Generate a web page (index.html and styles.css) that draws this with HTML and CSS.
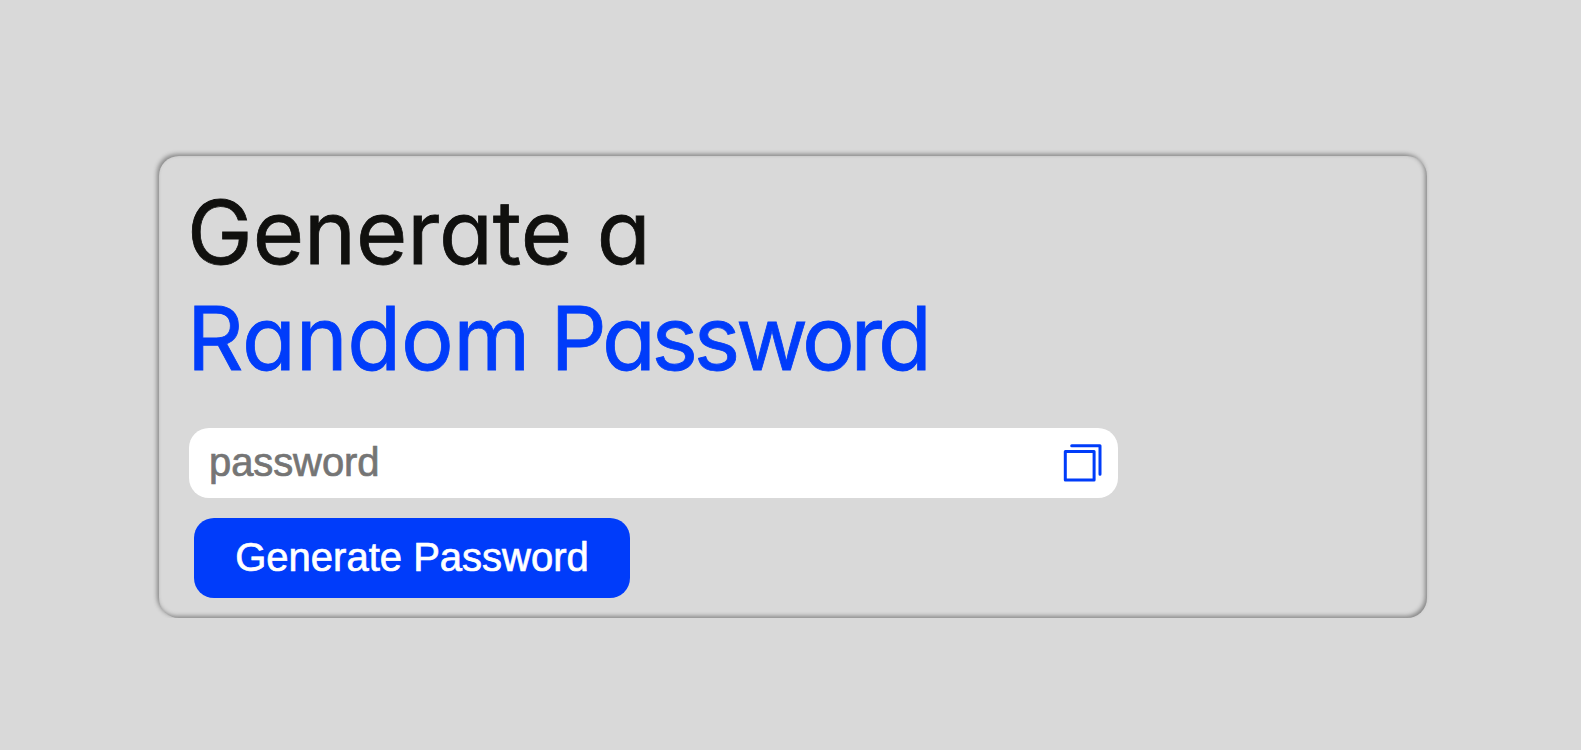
FILE: index.html
```
<!DOCTYPE html>
<html lang="en">
<head>
<meta charset="utf-8">
<title>Random Password Generator</title>
<link rel="stylesheet" href="styles.css">
</head>
<body>
<main class="card">
  <h1 class="title"><span class="line">Generate a</span><span class="line accent">Random <span class="word">Password</span></span></h1>
  <div class="display">
    <input class="field" type="text" placeholder="password" aria-label="password">
    <svg class="copy" viewBox="0 0 40 40" fill="none" stroke="currentColor" stroke-width="3" stroke-linecap="round" stroke-linejoin="round"><rect x="2.3" y="8.5" width="28.8" height="28.5"/><path d="M8.7 2.8h28.3v28.4"/></svg>
  </div>
  <button class="generate" type="button">Generate Password</button>
</main>
</body>
</html>
```
FILE: styles.css
```
* {
  box-sizing: border-box;
  margin: 0;
  padding: 0;
}
body {
  background: #d9d9d9;
  font-family: "Liberation Sans", Arial, sans-serif;
}
.card {
  width: 1268px;
  height: 462px;
  margin: 156px 0 0 159px;
  padding: 23px 30px 20px;
  border-radius: 20px;
  box-shadow: -2px -2px 4px #888, inset -2px -2px 4px #888;
}
.title {
  margin-left: -2px;
  font-family: Inter, sans-serif;
  font-feature-settings: "cv11";
  font-size: 88px;
  font-weight: 400;
  line-height: 106px;
  height: 249px;
  color: #10100e;
  letter-spacing: 0;
  -webkit-text-stroke: 0.8px currentColor;
}
.line {
  display: block;
  white-space: nowrap;
}
.accent {
  color: #003cfa;
  letter-spacing: -0.3px;
  word-spacing: -4px;
}
.word {
  letter-spacing: -4.3px;
}
.display {
  display: flex;
  align-items: center;
  width: 929px;
  height: 70px;
  padding: 0 15px 0 20px;
  background: #fff;
  border-radius: 20px;
}
.field {
  flex: 1;
  min-width: 0;
  height: 70px;
  padding-bottom: 2px;
  border: 0;
  outline: 0;
  background: transparent;
  font: 40px "Liberation Sans", Arial, sans-serif;
  letter-spacing: -0.1px;
}
.field::placeholder {
  color: #757575;
  -webkit-text-stroke: 0.7px #757575;
}
.copy {
  width: 40px;
  height: 40px;
  color: #003cfa;
}
.generate {
  display: block;
  width: 436px;
  height: 80px;
  margin: 20px 0 0 5px;
  padding-bottom: 2px;
  border: 0;
  border-radius: 20px;
  background: #003cfa;
  color: #fff;
  font: 40px "Liberation Sans", Arial, sans-serif;
  -webkit-text-stroke: 0.7px #fff;
}
```
